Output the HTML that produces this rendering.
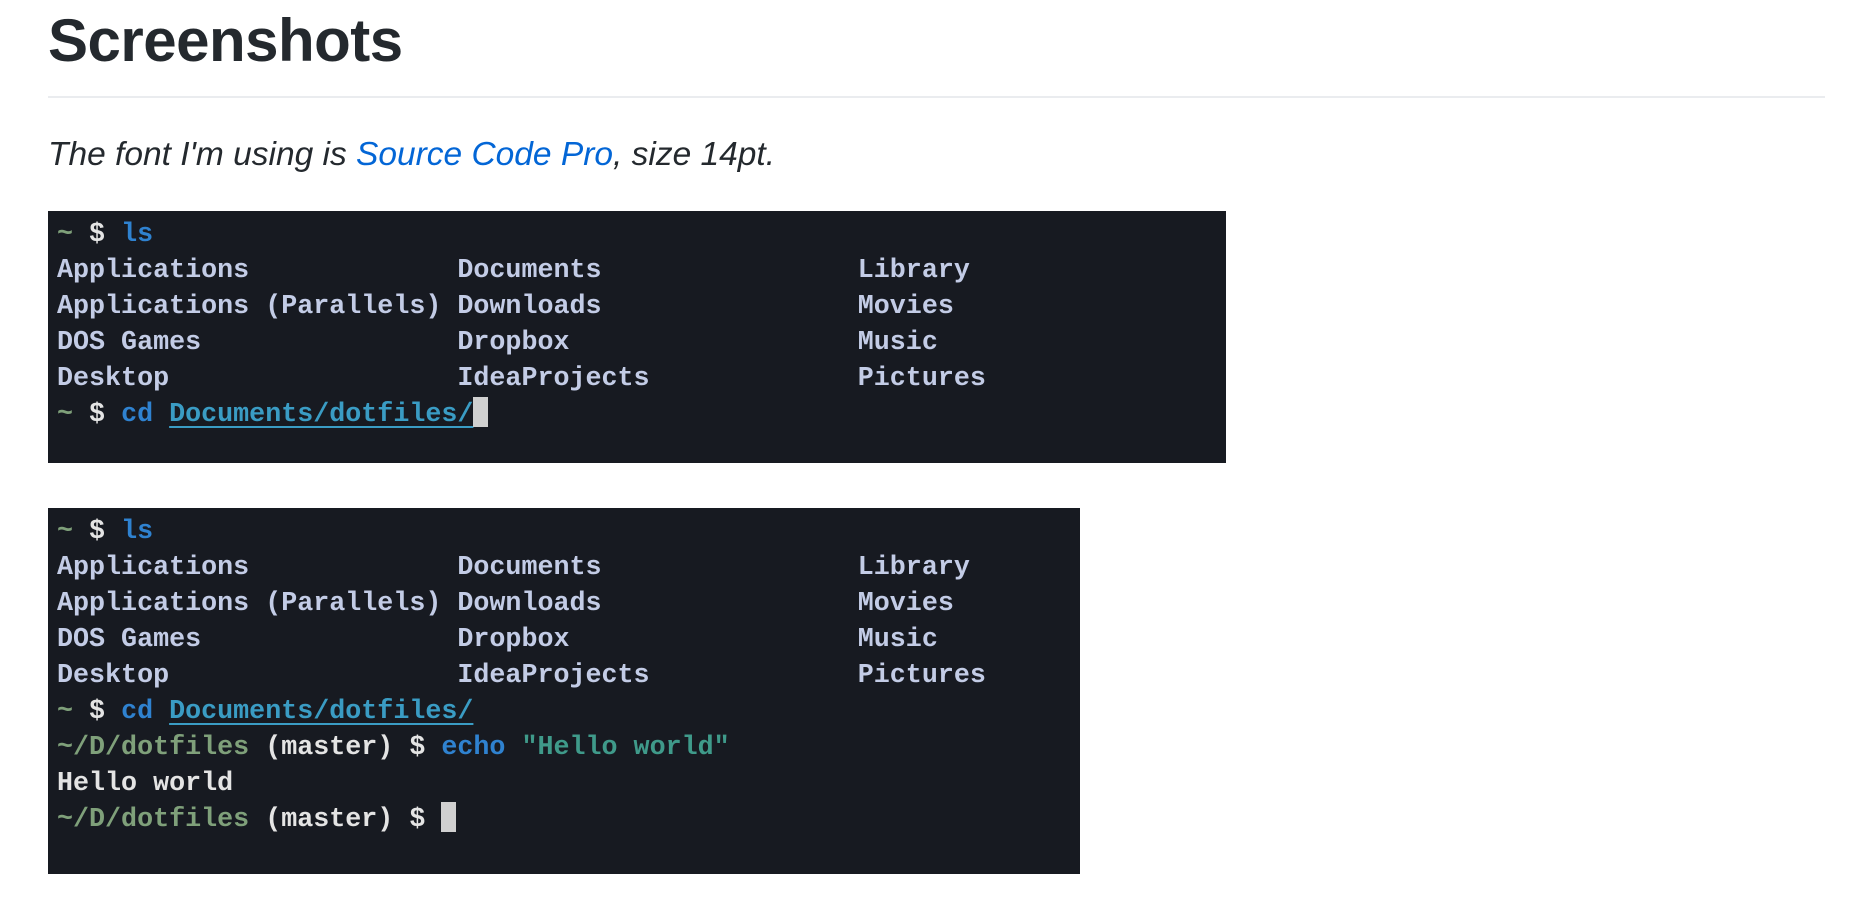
<!DOCTYPE html>
<html><head><meta charset="utf-8"><style>
body{margin:0;background:#fff;width:1864px;height:904px;overflow:hidden;font-family:"Liberation Sans",sans-serif;color:#24292e}
h1{position:absolute;left:48px;top:0;margin:0;font-size:60px;font-weight:bold;line-height:82px;letter-spacing:-0.5px}
.hr{position:absolute;left:48px;top:96px;height:2px;background:#eaecef;width:1777px}
p{position:absolute;left:48px;top:135px;margin:0;font-size:33.5px;font-style:italic;line-height:40px}
p a{color:#0366d6;text-decoration:none}
.t{position:absolute;left:48px;background:#171a21;font-family:"Liberation Mono",monospace;font-size:26.7px;font-weight:bold;line-height:36px;color:#c3cce6;white-space:pre;padding:6px 0 0 9px;box-sizing:border-box}
.g{color:#7fa07a}.w{color:#e4e4e4}.b{color:#2f82d0}.u{color:#3a9cc4;text-decoration:underline;text-underline-offset:5px}.s{color:#3f9a8a}
.c{display:inline-block;width:15px;height:30px;background:#d0d0d0;vertical-align:-6px}
</style></head><body>
<h1>Screenshots</h1>
<div class="hr"></div>
<p>The font I'm using is <a>Source Code Pro</a>, size 14pt.</p>
<div class="t" style="top:211px;width:1178px;height:252px"><span class="g">~</span> <span class="w">$</span> <span class="b">ls</span>
Applications             Documents                Library
Applications (Parallels) Downloads                Movies
DOS Games                Dropbox                  Music
Desktop                  IdeaProjects             Pictures
<span class="g">~</span> <span class="w">$</span> <span class="b">cd</span> <span class="u">Documents/dotfiles/</span><span class="c"></span></div>
<div class="t" style="top:508px;width:1032px;height:366px"><span class="g">~</span> <span class="w">$</span> <span class="b">ls</span>
Applications             Documents                Library
Applications (Parallels) Downloads                Movies
DOS Games                Dropbox                  Music
Desktop                  IdeaProjects             Pictures
<span class="g">~</span> <span class="w">$</span> <span class="b">cd</span> <span class="u">Documents/dotfiles/</span>
<span class="g">~/D/dotfiles</span> <span class="w">(master) $</span> <span class="b">echo</span> <span class="s">"Hello world"</span>
<span class="w">Hello world</span>
<span class="g">~/D/dotfiles</span> <span class="w">(master) $</span> <span class="c"></span></div>
</body></html>
